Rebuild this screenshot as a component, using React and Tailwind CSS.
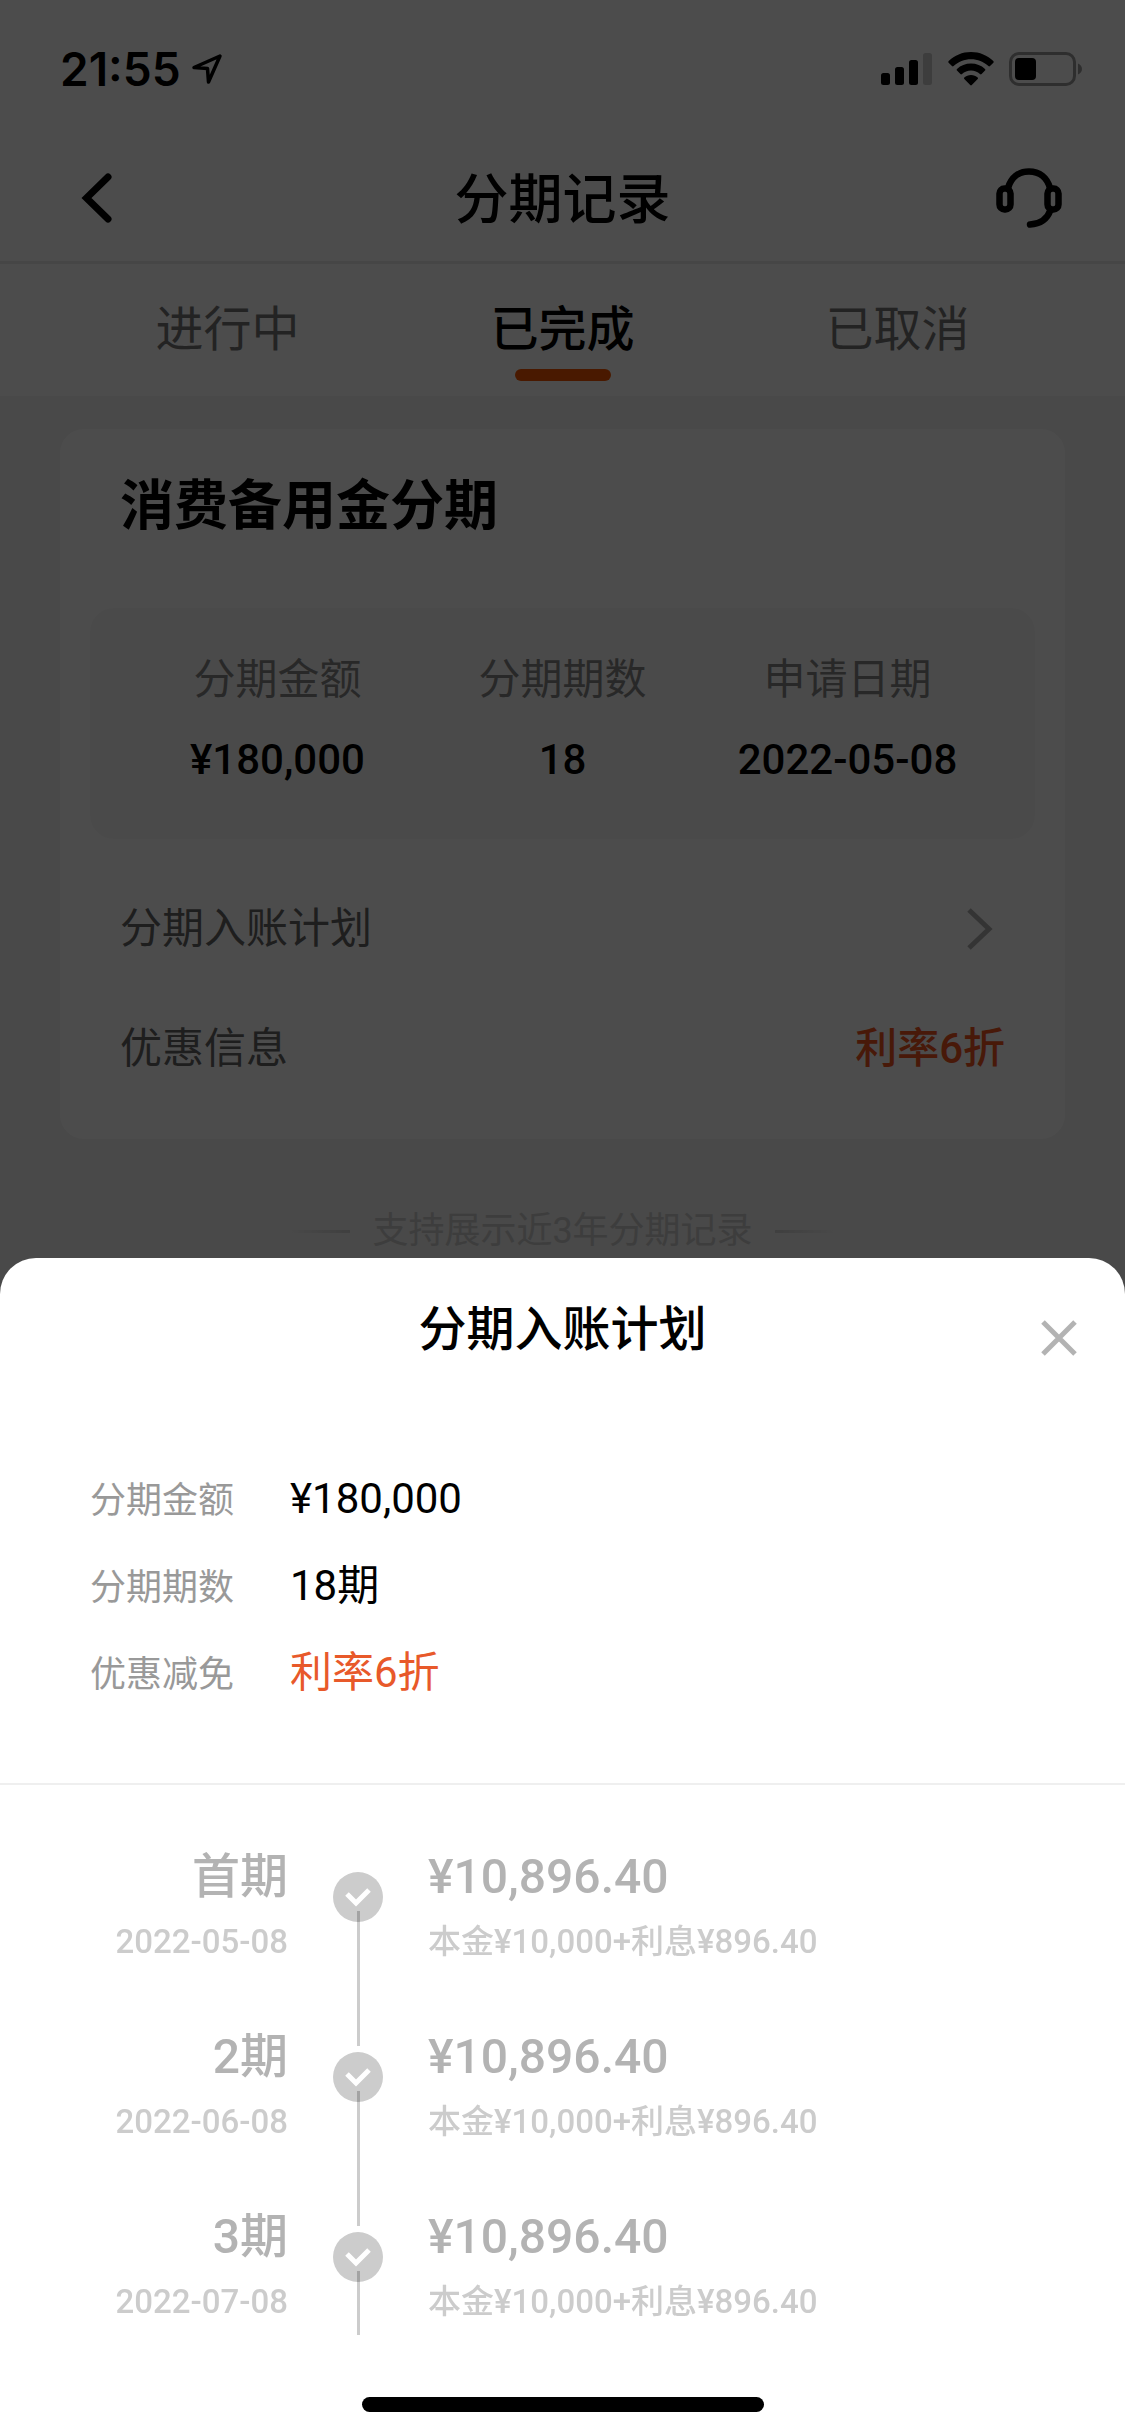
import React, { useState } from 'react';

const TABS = ['进行中', '已完成', '已取消'];

const SUMMARY = [
  { label: '分期金额', value: '¥180,000' },
  { label: '分期期数', value: '18' },
  { label: '申请日期', value: '2022-05-08' },
];

const PLAN_INFO = [
  { label: '分期金额', value: '¥180,000' },
  { label: '分期期数', value: '18期' },
  { label: '优惠减免', value: '利率6折', highlight: true },
];

const PERIODS = [
  { name: '首期', date: '2022-05-08', amount: '¥10,896.40', detail: '本金¥10,000+利息¥896.40' },
  { name: '2期', date: '2022-06-08', amount: '¥10,896.40', detail: '本金¥10,000+利息¥896.40' },
  { name: '3期', date: '2022-07-08', amount: '¥10,896.40', detail: '本金¥10,000+利息¥896.40' },
];

const StatusBar = () => (
  <div className="flex h-[132px] items-center justify-between pt-1.5 pl-[60px] pr-[42px]">
    <div className="flex items-center gap-2.5">
      <span className="font-['Inter',sans-serif] text-[46px] leading-[54px] font-semibold">21:55</span>
      <svg className="h-8 w-8" viewBox="0 0 32 32" fill="none" stroke="currentColor" strokeWidth="3.500" strokeLinejoin="round">
        <path d="M29 3 L3 14.5 L16.5 15.5 L17.5 29 Z" />
      </svg>
    </div>
    <div className="flex items-center gap-[15px]">
      <svg className="h-[34px] w-[52px]" viewBox="0 0 52 34" fill="currentColor">
        <rect x="0" y="21" width="9" height="12" rx="2.5" />
        <rect x="14" y="15" width="9" height="18" rx="2.5" />
        <rect x="28" y="8" width="9" height="25" rx="2.5" />
        <rect x="42" y="1" width="9" height="32" rx="2.5" opacity="0.2" />
      </svg>
      <svg className="h-[34px] w-[46px]" viewBox="0 0 46 34" fill="currentColor">
        <path d="M23 0C31.600 0 39.500 3.400 45.300 9C45.800 9.500 45.800 10.200 45.400 10.700L42 14.100C41.500 14.600 40.900 14.600 40.400 14.100C35.700 9.700 29.600 7.200 23 7.200C16.400 7.200 10.300 9.700 5.600 14.100C5.100 14.600 4.500 14.600 4 14.100L0.600 10.700C0.200 10.200 0.200 9.500 0.700 9C6.500 3.400 14.400 0 23 0Z" />
        <path d="M23 11.500C28.400 11.500 33.300 13.500 37 16.900C37.500 17.400 37.500 18.100 37 18.600L33.600 22C33.100 22.500 32.500 22.500 32 22C29.600 19.900 26.400 18.600 23 18.600C19.600 18.600 16.400 19.900 14 22C13.500 22.500 12.900 22.500 12.400 22L9 18.600C8.500 18.100 8.500 17.400 9 16.900C12.700 13.500 17.600 11.500 23 11.500Z" />
        <path d="M23 23C25.600 23 27.900 23.900 29.700 25.500C30.200 26 30.200 26.600 29.700 27.100L23.800 33C23.300 33.500 22.700 33.500 22.200 33L16.300 27.100C15.800 26.600 15.800 26 16.300 25.500C18.100 23.900 20.400 23 23 23Z" />
      </svg>
      <svg className="h-[34px] w-[74px]" viewBox="0 0 74 34" fill="none">
        <rect x="1.500" y="1.500" width="64" height="31" rx="8.500" stroke="currentColor" strokeWidth="3" opacity="0.4" />
        <rect x="6" y="6" width="21" height="22" rx="4" fill="currentColor" />
        <path d="M69 11.500C71.500 12.500 73 14.500 73 17C73 19.500 71.500 21.500 69 22.500Z" fill="currentColor" opacity="0.4" />
      </svg>
    </div>
  </div>
);

const NavBar = () => (
  <header className="grid h-[132px] grid-cols-[1fr_auto_1fr] items-center border-b-[3px] border-[#ebebeb] px-[63px] pt-[3px]">
    <button type="button" aria-label="返回" className="justify-self-start pl-[15px]">
      <svg className="h-[54px] w-9" viewBox="0 0 36 54" fill="none" stroke="currentColor" strokeWidth="7" strokeLinecap="round" strokeLinejoin="miter">
        <path d="M30 6 L8.500 27 L30 48" />
      </svg>
    </button>
    <h1 className="pt-1.5 text-[54px] leading-[60px] font-medium">分期记录</h1>
    <button type="button" aria-label="客服" className="justify-self-end">
      <svg className="h-[60px] w-[66px]" viewBox="0 0 66 60" fill="none" stroke="currentColor" strokeWidth="6.500" strokeLinecap="round">
        <rect x="3.500" y="20.500" width="11" height="21" rx="5" />
        <rect x="51.500" y="20.500" width="11" height="21" rx="5" />
        <path d="M12 20C15 9.500 22.500 3.500 33 3.500C43.500 3.500 51 9.500 54 20" />
        <path d="M54.500 42C51.500 50.500 44.500 56 34 56.500" />
      </svg>
    </button>
  </header>
);

const InstallmentCard = ({ onOpenPlan }) => (
  <section className="mx-[60px] rounded-3xl bg-white pt-12 pb-[60px]">
    <h2 className="px-[60px] text-[54px] leading-[60px] font-bold">消费备用金分期</h2>

    <dl className="mx-[30px] mt-[71px] grid grid-cols-3 rounded-3xl bg-[#f9f9f9] px-[45px] pt-[42px] pb-[49px] text-center">
      {SUMMARY.map(item => (
        <div key={item.label}>
          <dt className="text-[42px] leading-[60px] text-[#888]">{item.label}</dt>
          <dd className="mt-5 text-[42px] leading-[60px] font-medium">{item.value}</dd>
        </div>
      ))}
    </dl>

    <button
      type="button"
      onClick={onOpenPlan}
      className="mt-[60px] flex w-full items-center justify-between pl-[60px] pr-[72px] text-[42px] leading-[60px] text-[#666]"
    >
      分期入账计划
      <svg className="h-[42px] w-[26px]" viewBox="0 0 26 42" fill="none" stroke="#b0b0b0" strokeWidth="5">
        <path d="M2 2 L22 21 L2 40" />
      </svg>
    </button>
    <div className="mt-[60px] flex items-center justify-between px-[60px] text-[42px] leading-[60px]">
      <span className="text-[#666]">优惠信息</span>
      <span className="font-medium text-[#f0541e]">利率6折</span>
    </div>
  </section>
);

const PlanSheet = ({ onClose }) => (
  <div role="dialog" aria-label="分期入账计划" className="rounded-t-[36px] bg-white pb-6">
    <div className="grid grid-cols-[1fr_auto_1fr] items-start px-12 pt-[42px]">
      <h2 className="col-start-2 text-[48px] leading-[60px] font-medium">分期入账计划</h2>
      <button type="button" aria-label="关闭" onClick={onClose} className="mt-5 justify-self-end">
        <svg className="h-9 w-9" viewBox="0 0 36 36" fill="none" stroke="#b3b3b3" strokeWidth="5">
          <path d="M2 2 L34 34 M34 2 L2 34" />
        </svg>
      </button>
    </div>

    <dl className="flex flex-col gap-[27px] border-b-2 border-[#efefef] px-[90px] pt-[109px] pb-20">
      {PLAN_INFO.map(item => (
        <div key={item.label} className="flex h-[60px] items-baseline">
          <dt className="w-[200px] text-[36px] leading-[60px] text-[#999]">{item.label}</dt>
          <dd className={`text-[42px] leading-[60px] ${item.highlight ? 'text-[#e8592a]' : ''}`}>{item.value}</dd>
        </div>
      ))}
    </dl>

    {/* timeline */}
    <ol className="h-[550px] overflow-hidden pt-[62px]">
      {PERIODS.map(p => (
        <li key={p.name} className="flex h-[180px] items-start">
          <div className="w-[288px] text-right">
            <p className="text-[48px] leading-[60px] font-medium text-[#b3b3b3]">{p.name}</p>
            <p className="mt-[11px] text-[33px] leading-[48px] font-medium text-[#ccc]">{p.date}</p>
          </div>
          <div className="mt-[25px] flex w-[140px] flex-col items-center">
            <svg className="h-[50px] w-[50px]" viewBox="0 0 50 50" fill="none">
              <circle cx="25" cy="25" r="25" fill="#ccc" />
              <path d="M14 22 L23 31 L36 18" stroke="#fff" strokeWidth="5" />
            </svg>
            <span className="-mt-[11px] h-[135px] w-[3px] bg-black/20" />
          </div>
          <div>
            <p className="text-[48px] leading-[60px] font-medium text-[#b3b3b3]">{p.amount}</p>
            <p className="mt-[11px] text-[33px] leading-[48px] font-medium text-[#ccc]">{p.detail}</p>
          </div>
        </li>
      ))}
    </ol>

    <div className="mx-auto mt-[62px] h-[15px] w-[402px] rounded-full bg-black" />
  </div>
);

const App = () => {
  const [activeTab, setActiveTab] = useState('已完成');
  const [planOpen, setPlanOpen] = useState(true);

  return (
    <div className="min-h-screen bg-[#f4f4f4] font-['Roboto','Noto_Sans_CJK_SC',sans-serif] text-black">
      <div className="bg-white">
        <StatusBar />
        <NavBar />
        <nav className="grid h-[132px] grid-cols-3 items-start px-[60px] pt-9">
          {TABS.map(tab => (
            <button key={tab} type="button" onClick={() => setActiveTab(tab)} className="flex flex-col items-center">
              <span className={`text-[48px] leading-[60px] ${tab === activeTab ? 'font-medium' : 'text-[#777]'}`}>{tab}</span>
              {tab === activeTab && <span className="mt-[9px] h-3 w-24 rounded-full bg-[#f65600]" />}
            </button>
          ))}
        </nav>
      </div>

      <main className="pt-[33px]">
        <InstallmentCard onOpenPlan={() => setPlanOpen(true)} />
        <div className="mt-[68px] flex items-center justify-center gap-[22px] text-[36px] leading-[48px] text-[#ccc]">
          <span className="h-[3px] w-[60px] bg-linear-to-r from-transparent to-[#d4d4d4]" />
          支持展示近3年分期记录
          <span className="h-[3px] w-[60px] bg-linear-to-l from-transparent to-[#d4d4d4]" />
        </div>
      </main>

      {planOpen && (
        <div className="fixed inset-0 flex flex-col justify-end bg-black/70">
          <PlanSheet onClose={() => setPlanOpen(false)} />
        </div>
      )}
    </div>
  );
};

export default App;
